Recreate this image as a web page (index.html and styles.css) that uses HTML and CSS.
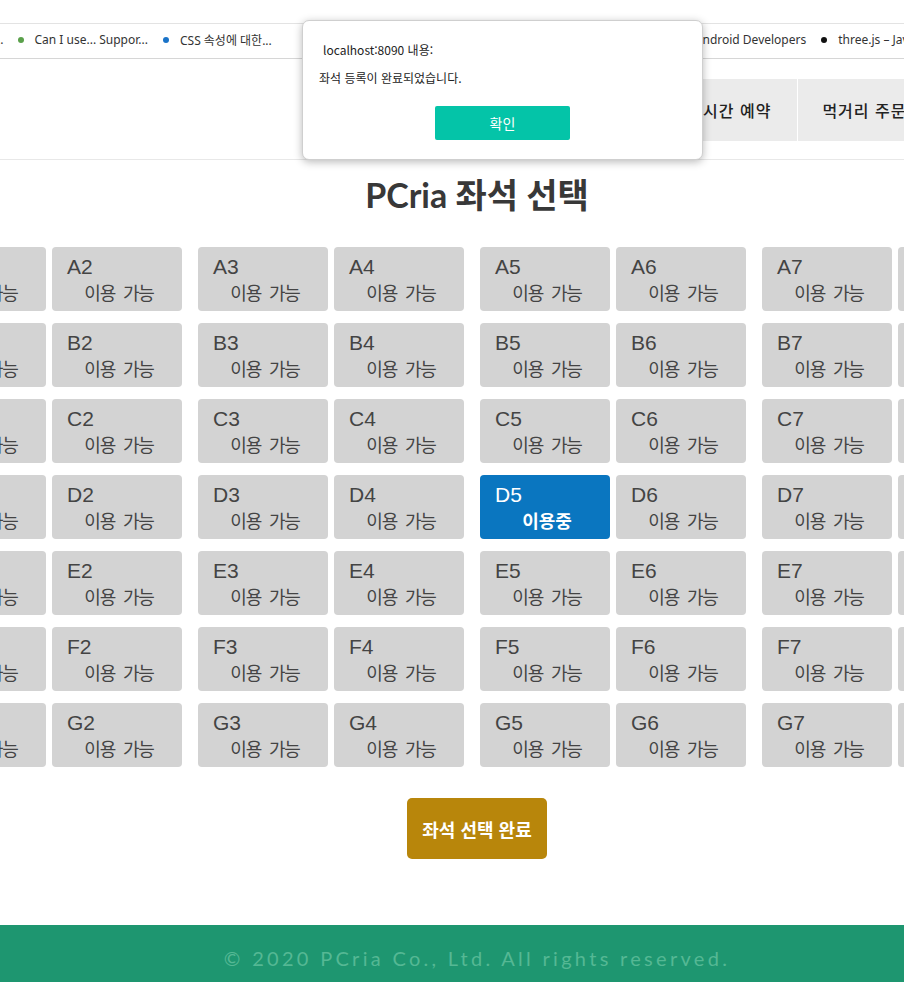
FILE: index.html
```html
<!DOCTYPE html>
<html lang="ko">
<head>
<meta charset="utf-8">
<title>PCria 좌석 선택</title>
<link rel="stylesheet" href="styles.css">
</head>
<body>
<div class="bookmarks">
  <span class="bm bm-cut">…</span>
  <span class="bm"><i class="dot dot-green"></i>Can I use... Suppor...</span>
  <span class="bm"><i class="dot dot-blue"></i>CSS 속성에 대한...</span>
  <span class="bm bm-android">Android Developers</span>
  <span class="bm"><i class="dot dot-black"></i>three.js – Jav</span>
</div>

<header class="header">
  <nav class="nav">
    <a class="nav-item">시간 예약</a>
    <a class="nav-item">먹거리 주문</a>
  </nav>
</header>

<main class="main">
  <h1 class="title">PCria 좌석 선택</h1>
  <div class="seats">
    <div class="row">
      <div class="pair"><div class="seat"><span class="code">A1</span><span class="state">이용 가능</span></div><div class="seat"><span class="code">A2</span><span class="state">이용 가능</span></div></div>
      <div class="pair"><div class="seat"><span class="code">A3</span><span class="state">이용 가능</span></div><div class="seat"><span class="code">A4</span><span class="state">이용 가능</span></div></div>
      <div class="pair"><div class="seat"><span class="code">A5</span><span class="state">이용 가능</span></div><div class="seat"><span class="code">A6</span><span class="state">이용 가능</span></div></div>
      <div class="pair"><div class="seat"><span class="code">A7</span><span class="state">이용 가능</span></div><div class="seat"><span class="code">A8</span><span class="state">이용 가능</span></div></div>
    </div>
    <div class="row">
      <div class="pair"><div class="seat"><span class="code">B1</span><span class="state">이용 가능</span></div><div class="seat"><span class="code">B2</span><span class="state">이용 가능</span></div></div>
      <div class="pair"><div class="seat"><span class="code">B3</span><span class="state">이용 가능</span></div><div class="seat"><span class="code">B4</span><span class="state">이용 가능</span></div></div>
      <div class="pair"><div class="seat"><span class="code">B5</span><span class="state">이용 가능</span></div><div class="seat"><span class="code">B6</span><span class="state">이용 가능</span></div></div>
      <div class="pair"><div class="seat"><span class="code">B7</span><span class="state">이용 가능</span></div><div class="seat"><span class="code">B8</span><span class="state">이용 가능</span></div></div>
    </div>
    <div class="row">
      <div class="pair"><div class="seat"><span class="code">C1</span><span class="state">이용 가능</span></div><div class="seat"><span class="code">C2</span><span class="state">이용 가능</span></div></div>
      <div class="pair"><div class="seat"><span class="code">C3</span><span class="state">이용 가능</span></div><div class="seat"><span class="code">C4</span><span class="state">이용 가능</span></div></div>
      <div class="pair"><div class="seat"><span class="code">C5</span><span class="state">이용 가능</span></div><div class="seat"><span class="code">C6</span><span class="state">이용 가능</span></div></div>
      <div class="pair"><div class="seat"><span class="code">C7</span><span class="state">이용 가능</span></div><div class="seat"><span class="code">C8</span><span class="state">이용 가능</span></div></div>
    </div>
    <div class="row">
      <div class="pair"><div class="seat"><span class="code">D1</span><span class="state">이용 가능</span></div><div class="seat"><span class="code">D2</span><span class="state">이용 가능</span></div></div>
      <div class="pair"><div class="seat"><span class="code">D3</span><span class="state">이용 가능</span></div><div class="seat"><span class="code">D4</span><span class="state">이용 가능</span></div></div>
      <div class="pair"><div class="seat seat-busy"><span class="code">D5</span><span class="state">이용중</span></div><div class="seat"><span class="code">D6</span><span class="state">이용 가능</span></div></div>
      <div class="pair"><div class="seat"><span class="code">D7</span><span class="state">이용 가능</span></div><div class="seat"><span class="code">D8</span><span class="state">이용 가능</span></div></div>
    </div>
    <div class="row">
      <div class="pair"><div class="seat"><span class="code">E1</span><span class="state">이용 가능</span></div><div class="seat"><span class="code">E2</span><span class="state">이용 가능</span></div></div>
      <div class="pair"><div class="seat"><span class="code">E3</span><span class="state">이용 가능</span></div><div class="seat"><span class="code">E4</span><span class="state">이용 가능</span></div></div>
      <div class="pair"><div class="seat"><span class="code">E5</span><span class="state">이용 가능</span></div><div class="seat"><span class="code">E6</span><span class="state">이용 가능</span></div></div>
      <div class="pair"><div class="seat"><span class="code">E7</span><span class="state">이용 가능</span></div><div class="seat"><span class="code">E8</span><span class="state">이용 가능</span></div></div>
    </div>
    <div class="row">
      <div class="pair"><div class="seat"><span class="code">F1</span><span class="state">이용 가능</span></div><div class="seat"><span class="code">F2</span><span class="state">이용 가능</span></div></div>
      <div class="pair"><div class="seat"><span class="code">F3</span><span class="state">이용 가능</span></div><div class="seat"><span class="code">F4</span><span class="state">이용 가능</span></div></div>
      <div class="pair"><div class="seat"><span class="code">F5</span><span class="state">이용 가능</span></div><div class="seat"><span class="code">F6</span><span class="state">이용 가능</span></div></div>
      <div class="pair"><div class="seat"><span class="code">F7</span><span class="state">이용 가능</span></div><div class="seat"><span class="code">F8</span><span class="state">이용 가능</span></div></div>
    </div>
    <div class="row">
      <div class="pair"><div class="seat"><span class="code">G1</span><span class="state">이용 가능</span></div><div class="seat"><span class="code">G2</span><span class="state">이용 가능</span></div></div>
      <div class="pair"><div class="seat"><span class="code">G3</span><span class="state">이용 가능</span></div><div class="seat"><span class="code">G4</span><span class="state">이용 가능</span></div></div>
      <div class="pair"><div class="seat"><span class="code">G5</span><span class="state">이용 가능</span></div><div class="seat"><span class="code">G6</span><span class="state">이용 가능</span></div></div>
      <div class="pair"><div class="seat"><span class="code">G7</span><span class="state">이용 가능</span></div><div class="seat"><span class="code">G8</span><span class="state">이용 가능</span></div></div>
    </div>
  </div>
  <div class="actions">
    <button class="done-btn" type="button">좌석 선택 완료</button>
  </div>
</main>

<footer class="footer">
  <p class="copy">© 2020 PCria Co., Ltd. All rights reserved.</p>
</footer>

<div class="dialog" role="alertdialog">
  <p class="dialog-origin">localhost:8090 내용:</p>
  <p class="dialog-msg">좌석 등록이 완료되었습니다.</p>
  <div class="dialog-actions">
    <button class="dialog-btn" type="button">확인</button>
  </div>
</div>
</body>
</html>
```

FILE: styles.css
```css
html, body {
  margin: 0;
  padding: 0;
  overflow: hidden;
  background: #fff;
}
body {
  width: 954px;
  position: relative;
  font-family: "Noto Sans CJK KR", "Noto Sans", sans-serif;
}

/* bookmarks bar */
.bookmarks {
  margin-top: 23px;
  height: 34px;
  border-top: 1px solid #e3e3e3;
  border-bottom: 1px solid #d6d6d6;
  display: flex;
  align-items: center;
  padding-bottom: 3px;
  box-sizing: content-box;
  height: 31px;
  font-family: "Noto Sans", "Noto Sans CJK KR", sans-serif;
  font-size: 12px;
  color: #333;
  white-space: nowrap;
  width: 904px;
  overflow: hidden;
}
.bm {
  display: flex;
  align-items: center;
}
.bm-cut { margin-left: -6px; margin-right: 14px; }
.bm + .bm { margin-left: 15px; }
.bm-cut + .bm { margin-left: 0; }
.dot {
  width: 6px;
  height: 6px;
  border-radius: 50%;
  margin-right: 11px;
  display: inline-block;
}
.dot-green { background: #5aa04a; }
.dot-blue { background: #1a73c8; }
.dot-black { background: #111; }
.bm-android { margin-left: 423px !important; }

/* header */
.header {
  width: 904px;
  height: 101px;
  border-bottom: 1px solid #e8e8e8;
  display: flex;
  align-items: flex-start;
  padding-top: 20px;
  box-sizing: border-box;
  overflow: hidden;
}
.nav {
  display: flex;
  margin-left: 677px;
  gap: 1px;
}
.nav-item {
  display: flex;
  align-items: center;
  height: 62px;
  padding: 0 26px;
  background: #ebebeb;
  color: #222;
  font-size: 16px;
  font-weight: 500;
  letter-spacing: 1px;
  white-space: nowrap;
}
.nav-item + .nav-item { padding-left: 24px; }

/* main */
.main {
  width: 954px;
}
.title {
  margin: 16px 0 33px;
  text-align: center;
  font-family: "Lato", "Noto Sans CJK KR", sans-serif;
  font-weight: 700;
  font-size: 34px;
  line-height: 38px;
  color: #383838;
}
.seats {
  margin-left: -84px;
  display: flex;
  flex-direction: column;
  gap: 12px;
}
.row {
  display: flex;
  gap: 16px;
}
.pair {
  display: flex;
  gap: 6px;
}
.seat {
  width: 130px;
  height: 64px;
  box-sizing: border-box;
  background: #d3d3d3;
  border-radius: 4px;
  padding: 8px 15px 0;
  display: flex;
  flex-direction: column;
  color: #444;
}
.code {
  font-family: "Liberation Sans", Arial, sans-serif;
  font-size: 21px;
  line-height: 24px;
}
.state {
  text-align: center;
  font-family: "Noto Sans CJK KR", sans-serif;
  font-size: 18px;
  letter-spacing: -1.2px;
  word-spacing: 4px;
  line-height: 26px;
  padding-left: 4px;
}
.seat-busy {
  background: #0a76c0;
  color: #fff;
}
.seat-busy .state { font-weight: 700; letter-spacing: 0; word-spacing: 0; }

.actions {
  display: flex;
  justify-content: center;
  margin-top: 31px;
}
.done-btn {
  width: 140px;
  height: 61px;
  border: 0;
  border-radius: 5px;
  background: #b8860b;
  color: #fff;
  font-family: "Noto Sans CJK KR", sans-serif;
  font-weight: 700;
  font-size: 18px;
}

/* footer */
.footer {
  margin-top: 66px;
  height: 70px;
  background: #1e9670;
  display: flex;
  justify-content: center;
  padding-top: 22px;
  box-sizing: border-box;
}
.copy {
  margin: 0;
  font-family: "Lato", sans-serif;
  font-size: 20px;
  line-height: 22px;
  letter-spacing: 3.3px;
  color: #55b894;
}

/* alert dialog */
.dialog {
  position: absolute;
  top: 20px;
  left: 302px;
  width: 401px;
  height: 140px;
  box-sizing: border-box;
  background: #fff;
  border: 1px solid #cfcfcf;
  border-radius: 7px;
  box-shadow: 0 2px 8px rgba(0,0,0,0.28);
  padding: 20px 16px 0;
  font-family: "Noto Sans CJK KR", sans-serif;
  color: #222;
}
.dialog-origin {
  margin: 0 0 0 4px;
  font-size: 12px;
  line-height: 18px;
}
.dialog-msg {
  margin: 10px 0 0;
  font-size: 12px;
  line-height: 18px;
}
.dialog-actions {
  display: flex;
  justify-content: center;
  margin-top: 19px;
}
.dialog-btn {
  width: 135px;
  height: 34px;
  border: 0;
  border-radius: 2px;
  background: #04c4a8;
  color: #fff;
  font-family: "Noto Sans CJK KR", sans-serif;
  font-size: 14px;
  margin-left: 0;
}
```
